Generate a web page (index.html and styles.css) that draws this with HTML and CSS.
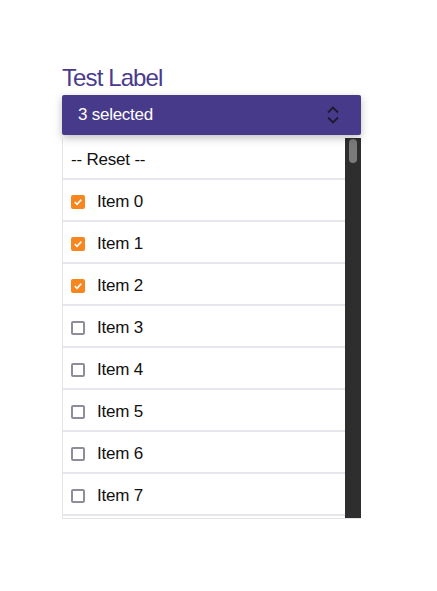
FILE: index.html
```html
<!DOCTYPE html>
<html>
<head>
<meta charset="utf-8">
<link rel="stylesheet" href="styles.css">
</head>
<body>
<div class="field">
  <div class="label">Test Label</div>
  <button class="select">
    <span>3 selected</span>
    <svg class="chev" width="12" height="18" viewBox="0 0 12 18"><path d="M1 6.5 L6 1.5 L11 6.5 M1 11.5 L6 16.5 L11 11.5" fill="none" stroke="#1e1a2e" stroke-width="1.8"/></svg>
  </button>
  <div class="list">
    <div class="rows">
      <div class="row">-- Reset --</div>
      <div class="row"><span class="cb on"><svg width="10" height="10" viewBox="0 0 10 10"><path d="M1.8 5.2 L4 7.3 L8.3 2.6" fill="none" stroke="#fff" stroke-width="1.6"/></svg></span>Item 0</div>
      <div class="row"><span class="cb on"><svg width="10" height="10" viewBox="0 0 10 10"><path d="M1.8 5.2 L4 7.3 L8.3 2.6" fill="none" stroke="#fff" stroke-width="1.6"/></svg></span>Item 1</div>
      <div class="row"><span class="cb on"><svg width="10" height="10" viewBox="0 0 10 10"><path d="M1.8 5.2 L4 7.3 L8.3 2.6" fill="none" stroke="#fff" stroke-width="1.6"/></svg></span>Item 2</div>
      <div class="row"><span class="cb"></span>Item 3</div>
      <div class="row"><span class="cb"></span>Item 4</div>
      <div class="row"><span class="cb"></span>Item 5</div>
      <div class="row"><span class="cb"></span>Item 6</div>
      <div class="row"><span class="cb"></span>Item 7</div>
    </div>
    <div class="scrollbar"><div class="thumb"></div></div>
  </div>
</div>
</body>
</html>
```
FILE: styles.css
```css
html, body { margin: 0; padding: 0; background: #fff; }
body { font-family: "Liberation Sans", Arial, sans-serif; }
.field { width: 299px; margin-left: 62px; padding-top: 63px; }
.label { font-size: 24px; line-height: 30px; letter-spacing: -0.9px; color: #4a3b8c; margin-bottom: 2px; }
.select {
  position: relative; z-index: 1;
  display: flex; align-items: center; justify-content: space-between;
  width: 299px; height: 40px; padding: 0 22px 0 16px;
  background: #483a8a; color: #fff; border: 0; border-radius: 2px;
  font-family: inherit; font-size: 17px; letter-spacing: -0.25px; box-sizing: border-box;
  box-shadow: 0 3px 8px rgba(0,0,0,0.25);
}
.chev { display: block; }
.list {
  display: flex; height: 381px; margin-top: 3px;
  border-left: 1px solid #e4e4ea; border-bottom: 1px solid #e4e4ea;
  box-sizing: border-box;
}
.rows { flex: 1; overflow: hidden; }
.row {
  display: flex; align-items: center; gap: 12px;
  height: 37px; padding: 3px 0 0 8px;
  border-bottom: 2px solid #e6e6ec;
  font-size: 17px; letter-spacing: -0.2px; color: #111;
}
.cb {
  width: 14px; height: 14px; box-sizing: border-box;
  border: 2px solid #8f8d9a; border-radius: 2px; flex: none;
  display: flex; align-items: center; justify-content: center;
}
.cb.on { background: #f7861f; border-color: #f7861f; }
.cb svg { display: block; }
.scrollbar { width: 16px; background: #2e2e2e; flex: none; padding-top: 1px; box-sizing: border-box; }
.thumb { width: 8px; height: 24px; margin-left: 4px; background: #7a7a7a; border-radius: 4px; }
```
